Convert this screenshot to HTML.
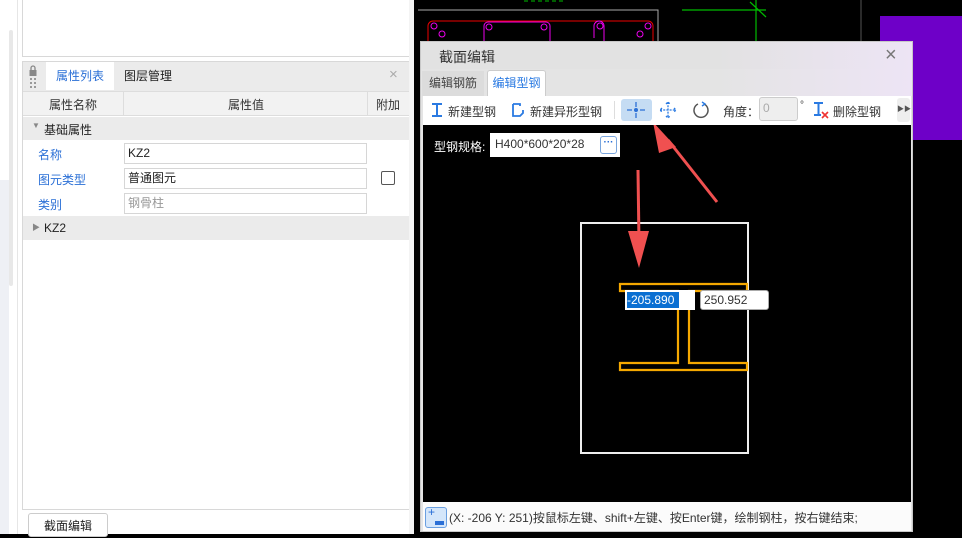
<!DOCTYPE html>
<html><head><meta charset="utf-8"><style>
*{margin:0;padding:0;box-sizing:border-box}
body{width:962px;height:534px;overflow:hidden;position:relative;background:#000;font-family:"Liberation Sans","Noto Sans CJK SC",sans-serif;font-size:12px;color:#333}
.a{position:absolute}
.inp{position:absolute;background:#fff;border:1px solid #d6d6d6;padding-left:3px;line-height:19px;font-size:12px}
.lbl{position:absolute;color:#2a6fd6;font-size:12px}
</style></head><body>
<!-- left panel -->
<div class="a" style="left:0;top:0;width:414px;height:534px;background:#fff"></div>
<div class="a" style="left:0;top:180px;width:9px;height:354px;background:#eef0f5"></div>
<div class="a" style="left:9px;top:30px;width:4px;height:256px;background:#e8e8e8;border-radius:2px"></div>
<div class="a" style="left:17px;top:0;width:1px;height:534px;background:#e6e6e6"></div>
<div class="a" style="left:22px;top:0;width:388px;height:57px;border:1px solid #d8d8d8;border-top:none"></div>
<div class="a" style="left:22px;top:61px;width:388px;height:449px;border:1px solid #d8d8d8;background:#fff"></div>
<div class="a" style="left:23px;top:62px;width:386px;height:29px;background:#ebebeb"></div>
<svg class="a" style="left:28px;top:65px" width="10" height="24"><rect x="1.5" y="5" width="7" height="6" fill="#888"/><path d="M3 5V3a2 2 0 0 1 4 0V5" stroke="#888" fill="none" stroke-width="1.3"/><g fill="#999"><rect x="2" y="13" width="2" height="2"/><rect x="6" y="13" width="2" height="2"/><rect x="2" y="17" width="2" height="2"/><rect x="6" y="17" width="2" height="2"/><rect x="2" y="21" width="2" height="2"/><rect x="6" y="21" width="2" height="2"/></g></svg>
<div class="a" style="left:46px;top:62px;width:68px;height:28px;background:#fff;color:#2a6fd6;font-size:12px;line-height:28px;text-align:center">属性列表</div>
<div class="a" style="left:124px;top:62px;font-size:12px;line-height:28px;color:#222">图层管理</div>
<div class="a" style="left:389px;top:66px;font-size:15px;color:#aaa">×</div>
<div class="a" style="left:23px;top:91px;width:386px;height:25px;background:#f2f2f2;border-top:1px solid #ddd;border-bottom:1px solid #ddd"></div>
<div class="a" style="left:123px;top:92px;width:1px;height:24px;background:#ddd"></div>
<div class="a" style="left:367px;top:92px;width:1px;height:24px;background:#ddd"></div>
<div class="a" style="left:49px;top:96px;color:#333">属性名称</div>
<div class="a" style="left:228px;top:96px;color:#333">属性值</div>
<div class="a" style="left:376px;top:96px;color:#333">附加</div>
<div class="a" style="left:23px;top:117px;width:386px;height:23px;background:#ebebeb"></div>
<div class="a" style="left:32px;top:121px;font-size:8px;color:#888">▼</div>
<div class="a" style="left:44px;top:121px;color:#222">基础属性</div>
<div class="lbl" style="left:38px;top:146px">名称</div>
<div class="inp" style="left:124px;top:143px;width:243px;height:21px;color:#222">KZ2</div>
<div class="lbl" style="left:38px;top:171px">图元类型</div>
<div class="inp" style="left:124px;top:168px;width:243px;height:21px;color:#222">普通图元</div>
<div class="a" style="left:381px;top:171px;width:14px;height:14px;border:1px solid #555;border-radius:2px;background:#fff"></div>
<div class="lbl" style="left:38px;top:196px">类别</div>
<div class="inp" style="left:124px;top:193px;width:243px;height:21px;color:#999">钢骨柱</div>
<div class="a" style="left:23px;top:216px;width:386px;height:24px;background:#ebebeb"></div>
<div class="a" style="left:32px;top:222px;font-size:8px;color:#888">▶</div>
<div class="a" style="left:44px;top:221px;color:#222">KZ2</div>
<div class="a" style="left:28px;top:513px;width:80px;height:24px;border:1px solid #ccc;border-radius:3px;background:#fff;text-align:center;line-height:24px;color:#222">截面编辑</div>
<div class="a" style="left:409px;top:0;width:5px;height:534px;background:#f4f4f4"></div>

<!-- CAD background -->
<svg class="a" style="left:414px;top:0" width="548" height="534">
<path d="M4 10H244V42" stroke="#aaa" fill="none"/>
<path d="M14 42V26a5 5 0 0 1 5-5H234a5 5 0 0 1 5 5V42" stroke="#e00" fill="none"/>
<path d="M70 42V26a4 4 0 0 1 4-4H132a4 4 0 0 1 4 4V42M180 38V26a5 5 0 0 1 10 0V42" stroke="#e0e" fill="none"/>
<g stroke="#e0e" fill="none"><circle cx="20" cy="26" r="3"/><circle cx="28" cy="34" r="3"/><circle cx="75" cy="27" r="3"/><circle cx="130" cy="27" r="3"/><circle cx="186" cy="26" r="3"/><circle cx="234" cy="26" r="3"/><circle cx="226" cy="34" r="3"/></g>
<path d="M268 10H352M342 0V42M336 2L352 17" stroke="#0b0" fill="none" stroke-width="1.2"/>
<path d="M110 1h40" stroke="#0b0" stroke-dasharray="4 3"/>
<path d="M447 0V42" stroke="#555"/>
<rect x="466" y="16" width="82" height="124" fill="#6e00c8"/>
</svg>

<!-- dialog -->
<div class="a" style="left:420px;top:41px;width:493px;height:491px;background:#e4e4e4;border:1px solid #c8c8c8"></div>
<div class="a" style="left:421px;top:42px;width:491px;height:27px;background:linear-gradient(90deg,#e2e2e2 60%,#ede4f5)"></div>
<div class="a" style="left:439px;top:47px;font-size:14px;color:#333">截面编辑</div>
<div class="a" style="left:885px;top:44px;font-size:20px;color:#777">×</div>
<div class="a" style="left:421px;top:69px;width:491px;height:27px;background:linear-gradient(90deg,#e4e4e4 60%,#ede4f5)"></div>
<div class="a" style="left:422px;top:71px;width:62px;height:25px;background:#dcdcdc;color:#444;line-height:25px;text-align:center">编辑钢筋</div>
<div class="a" style="left:487px;top:70px;width:59px;height:27px;background:#fff;border:1px solid #ccc;border-bottom:none;border-radius:3px 3px 0 0;color:#2a7ae2;line-height:25px;text-align:center">编辑型钢</div>
<div class="a" style="left:423px;top:96px;width:488px;height:29px;background:#fff"></div>
<svg class="a" style="left:430px;top:102px" width="14" height="16"><path d="M2 2H12M2 14H12M7 2V14" stroke="#2a7ae2" stroke-width="2" fill="none"/></svg>
<div class="a" style="left:448px;top:103px;color:#333">新建型钢</div>
<svg class="a" style="left:511px;top:102px" width="14" height="16"><path d="M2 2H9V4M2 2V14H9l3-3V8" stroke="#2a7ae2" stroke-width="1.8" fill="none"/></svg>
<div class="a" style="left:530px;top:103px;color:#333">新建异形型钢</div>
<div class="a" style="left:614px;top:101px;width:1px;height:18px;background:#ddd"></div>
<div class="a" style="left:621px;top:99px;width:31px;height:22px;background:#c5dcf3;border-radius:3px"></div>
<svg class="a" style="left:626px;top:101px" width="20" height="18"><path d="M10 1V6M10 12V17M1 9H6M14 9H19" stroke="#2a6fd6" stroke-width="1.3"/><circle cx="10" cy="9" r="2" fill="#2a6fd6"/></svg>
<svg class="a" style="left:658px;top:100px" width="20" height="20"><path d="M10 2V18M2 10H18M8 4L10 2L12 4M8 16L10 18L12 16M4 8L2 10L4 12M16 8L18 10L16 12" stroke="#2a7ae2" stroke-width="1.3" fill="none" stroke-dasharray="2 1.2"/></svg>
<svg class="a" style="left:692px;top:101px" width="18" height="18"><path d="M12 3A7 7 0 1 1 6 3" stroke="#555" stroke-width="1.5" fill="none"/><path d="M10 1L13 3L10 5" stroke="#2a7ae2" stroke-width="1.4" fill="none"/></svg>
<div class="a" style="left:723px;top:103px;color:#333">角度：</div>
<div class="a" style="left:759px;top:97px;width:39px;height:24px;background:#eee;border:1px solid #ccc;border-radius:3px;color:#aaa;padding:3px 0 0 3px">0</div>
<div class="a" style="left:800px;top:100px;font-size:10px;color:#333">°</div>
<svg class="a" style="left:812px;top:101px" width="18" height="18"><path d="M2 2H11M2 14H9M6.5 2V14" stroke="#2a7ae2" stroke-width="2" fill="none"/><path d="M10 11L16 17M16 11L10 17" stroke="#e33" stroke-width="1.6"/></svg>
<div class="a" style="left:833px;top:103px;color:#333">删除型钢</div>
<div class="a" style="left:897px;top:98px;width:13px;height:24px;background:#eee;border-radius:3px;font-size:7px;color:#555;text-align:center;line-height:24px">▶▶</div>

<!-- canvas -->
<div class="a" style="left:423px;top:125px;width:488px;height:377px;background:#000"></div>
<div class="a" style="left:434px;top:138px;color:#fff;font-size:12px">型钢规格:</div>
<div class="a" style="left:490px;top:133px;width:130px;height:24px;background:#fff;color:#333;padding:4px 0 0 5px">H400*600*20*28</div>
<div class="a" style="left:600px;top:136px;width:17px;height:18px;border:1px solid #7aa6de;border-radius:3px;color:#2a6fd6;font-size:10px;text-align:center;line-height:12px;font-weight:bold">···</div>
<svg class="a" style="left:423px;top:125px" width="488" height="377">
<rect x="158" y="98" width="167" height="230" stroke="#eee" stroke-width="2" fill="none"/>
<path d="M197 159H324V166H266V238H324V245H197V238H255V166H197Z" stroke="#f5a800" stroke-width="2.2" fill="none"/>
<path d="M215 45L216 118" stroke="#f05050" stroke-width="3"/>
<path d="M205 106L226 106L216 143Z" fill="#f05050"/>
<path d="M294 77L245 15" stroke="#f05050" stroke-width="3"/>
<path d="M230 -3L253 22L236 28Z" fill="#f05050"/>
</svg>
<div class="a" style="left:625px;top:290px;width:70px;height:20px;background:#fff"></div>
<div class="a" style="left:627px;top:292px;width:52px;height:16px;background:#0a6fd2;color:#fff;font-size:12px;line-height:16px">-205.890</div>
<div class="a" style="left:700px;top:290px;width:69px;height:20px;background:#fff;border:1px solid #aaa;border-radius:3px;color:#333;padding:2px 0 0 3px">250.952</div>

<!-- status -->
<div class="a" style="left:423px;top:502px;width:488px;height:29px;background:#fbfbfb"></div>
<div class="a" style="left:425px;top:507px;width:22px;height:21px;background:#d4e6fa;border:1px solid #6a9fe0;border-radius:3px"></div>
<div class="a" style="left:428px;top:505px;color:#2a6fd6;font-size:12px">+</div>
<div class="a" style="left:435px;top:521px;width:9px;height:4px;background:#2a6fd6"></div>
<div class="a" style="left:449px;top:509px;color:#333;font-size:12px">(X: -206 Y: 251)按鼠标左键、shift+左键、按Enter键，绘制钢柱，按右键结束;</div>
</body></html>
